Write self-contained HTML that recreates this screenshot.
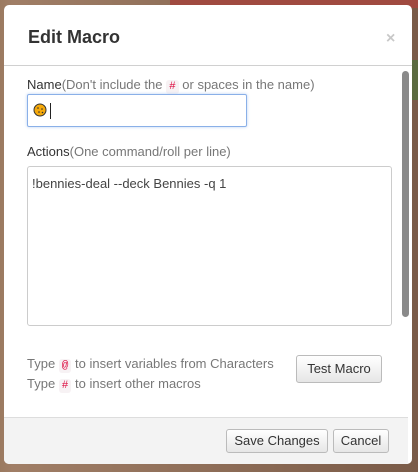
<!DOCTYPE html>
<html><head><style>
body{margin:0;width:418px;height:472px;overflow:hidden;background:#8a6a55;font-family:"Liberation Sans",sans-serif;position:relative}
.bg1{position:absolute;left:0;top:0;width:418px;height:472px;background:linear-gradient(90deg,#9b7a60 0,#a07e66 3%,#7a5b48 100%)}
.red{position:absolute;left:170px;top:0;width:248px;height:8px;background:#a04a40}
.g{position:absolute;left:410px;top:60px;width:8px;height:40px;background:#5a6a40}
.dlg{position:absolute;left:4px;top:5px;width:408px;height:459px;background:#fff;border-radius:5px;overflow:hidden}
.hd{position:absolute;left:0;top:0;width:408px;height:60px;border-bottom:1px solid #d0d0d0}
.hd h1{position:absolute;left:24px;top:22px;margin:0;font-size:18px;font-weight:bold;color:#333}
.x{position:absolute;left:382px;top:25px;font-size:16px;color:#c8c8c8;font-weight:bold}
.lbl{position:absolute;left:23px;font-size:13px;color:#333}
.lbl span{color:#777}
code{background:#f7f2f4;color:#d14;font-family:"Liberation Mono",monospace;font-size:11px;padding:1px 3px;border-radius:3px}
.in{position:absolute;left:23px;top:89px;width:220px;height:33px;border:1px solid #8ab0e8;box-shadow:0 0 3px #bcd3f3;box-sizing:border-box;border-radius:2px}
.ta{position:absolute;left:23px;top:161px;width:365px;height:160px;border:1px solid #ccc;border-radius:3px;box-sizing:border-box;font-size:13px;color:#444;padding:9px 4px}
.sb{position:absolute;left:398px;top:66px;width:7px;height:246px;background:#8a8a8a;border-radius:4px}
.tip{position:absolute;left:23px;top:350px;font-size:13px;color:#777;line-height:18px}
.btn{position:absolute;border:1px solid #bbb;border-radius:3px;background:linear-gradient(#fff,#e6e6e6);font-size:13px;color:#333;text-align:center;box-sizing:border-box}
.ft{position:absolute;left:0;top:412px;width:404px;height:47px;background:#f3f3f3;border-top:1px solid #ddd}
</style></head><body>
<div class="bg1"></div><div class="red"></div><div class="g"></div>
<div class="dlg">
<div class="hd"><h1>Edit Macro</h1><div class="x">×</div></div>
<div class="lbl" style="top:72px">Name<span>(Don't include the <code>#</code> or spaces in the name)</span></div>
<div class="in"><svg width="16" height="16" style="position:absolute;left:5px;top:8px" viewBox="0 0 16 16"><circle cx="7" cy="7" r="6" fill="#f5a90a" stroke="#333" stroke-width="1"/><circle cx="5" cy="5" r=".8" fill="#333"/><circle cx="9" cy="6" r=".8" fill="#333"/><circle cx="6" cy="9" r=".8" fill="#333"/><circle cx="9.5" cy="9.5" r=".8" fill="#333"/></svg><div style="position:absolute;left:22px;top:8px;width:1px;height:16px;background:#222"></div></div>
<div class="lbl" style="top:139px">Actions<span>(One command/roll per line)</span></div>
<div class="ta">!bennies-deal --deck Bennies -q 1</div>
<div class="sb"></div>
<div class="tip">Type <code>@</code> to insert variables from Characters<br>Type <code>#</code> to insert other macros</div>
<div class="btn" style="left:292px;top:350px;width:86px;height:28px;line-height:26px">Test Macro</div>
<div class="ft"></div>
<div class="btn" style="left:222px;top:424px;width:102px;height:24px;line-height:22px">Save Changes</div>
<div class="btn" style="left:329px;top:424px;width:56px;height:24px;line-height:22px">Cancel</div>
</div>
</body></html>
